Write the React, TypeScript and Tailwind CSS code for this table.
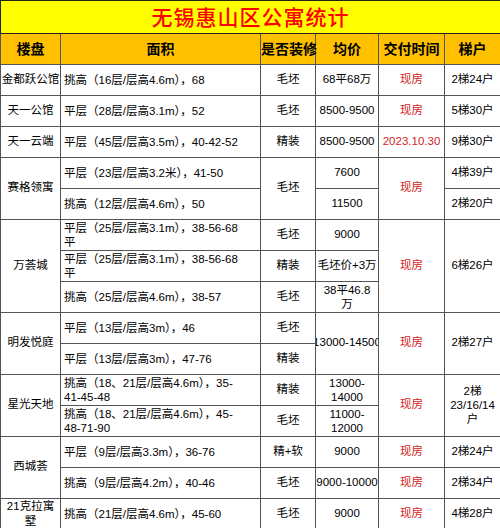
import React from 'react';

const td = 'border border-[#555] p-0 text-center align-middle';
const area = 'border border-[#555] pl-[3px] pr-0 text-left align-middle leading-[14px]';
const red = 'text-[#d42424]';

function Clip({ children }: { children: React.ReactNode }) {
  return (
    <div className="flex justify-center overflow-hidden whitespace-nowrap">
      <span>{children}</span>
    </div>
  );
}

export default function App() {
  return (
    <div className="w-[500px] h-[528px] overflow-hidden bg-white">
      <table className="w-[500px] table-fixed border-collapse border border-[#222] text-[11.5px] text-black font-['Liberation_Sans','Noto_Sans_CJK_SC',sans-serif]">
        <colgroup>
          <col className="w-[60px]" />
          <col className="w-[200px]" />
          <col className="w-[55px]" />
          <col className="w-[63px]" />
          <col className="w-[66px]" />
          <col className="w-[56px]" />
        </colgroup>
        <tbody>
          <tr className="h-[31px]">
            <td colSpan={6} className="border border-[#222] bg-[#ffff00] text-center align-middle">
              <span className="text-[21px] font-medium text-[#ff0000] tracking-[1px] font-['Noto_Sans_CJK_SC',sans-serif]">
                无锡惠山区公寓统计
              </span>
            </td>
          </tr>
          <tr className="h-[31px] bg-[#ffc000] text-[14px] font-bold text-black font-['Noto_Sans_CJK_SC',sans-serif]">
            <td className={td}>楼盘</td>
            <td className={td}>面积</td>
            <td className={`${td} whitespace-nowrap`}>是否装修</td>
            <td className={td}>均价</td>
            <td className={td}>交付时间</td>
            <td className={td}>梯户</td>
          </tr>

          <tr className="h-[31px]">
            <td className={`${td} whitespace-nowrap`}>金都跃公馆</td>
            <td className={area}>挑高（16层/层高4.6m），68</td>
            <td className={td}>毛坯</td>
            <td className={td}>68平68万</td>
            <td className={`${td} ${red}`}>现房</td>
            <td className={td}>2梯24户</td>
          </tr>
          <tr className="h-[31px]">
            <td className={td}>天一公馆</td>
            <td className={area}>平层（28层/层高3.1m），52</td>
            <td className={td}>毛坯</td>
            <td className={td}>8500-9500</td>
            <td className={`${td} ${red}`}>现房</td>
            <td className={td}>5梯30户</td>
          </tr>
          <tr className="h-[31px]">
            <td className={td}>天一云端</td>
            <td className={area}>平层（45层/层高3.5m），40-42-52</td>
            <td className={td}>精装</td>
            <td className={td}>8500-9500</td>
            <td className={`${td} ${red} whitespace-nowrap`}>2023.10.30</td>
            <td className={td}>9梯30户</td>
          </tr>

          <tr className="h-[31px]">
            <td rowSpan={2} className={td}>赛格领寓</td>
            <td className={area}>平层（23层/层高3.2米），41-50</td>
            <td rowSpan={2} className={td}>毛坯</td>
            <td className={td}>7600</td>
            <td rowSpan={2} className={`${td} ${red}`}>现房</td>
            <td className={td}>4梯39户</td>
          </tr>
          <tr className="h-[31px]">
            <td className={area}>挑高（12层/层高4.6m），50</td>
            <td className={td}>11500</td>
            <td className={td}>2梯20户</td>
          </tr>

          <tr className="h-[31px]">
            <td rowSpan={3} className={td}>万荟城</td>
            <td className={area}>平层（25层/层高3.1m），38-56-68<br />平</td>
            <td className={td}>毛坯</td>
            <td className={td}>9000</td>
            <td rowSpan={3} className={`${td} ${red}`}>现房</td>
            <td rowSpan={3} className={td}>6梯26户</td>
          </tr>
          <tr className="h-[31px]">
            <td className={area}>平层（25层/层高3.1m），38-56-68<br />平</td>
            <td className={td}>精装</td>
            <td className={`${td} whitespace-nowrap`}>毛坯价+3万</td>
          </tr>
          <tr className="h-[31px]">
            <td className={area}>挑高（25层/层高4.6m），38-57</td>
            <td className={td}>毛坯</td>
            <td className={`${td} leading-[14px]`}>38平46.8<br />万</td>
          </tr>

          <tr className="h-[31px]">
            <td rowSpan={2} className={td}>明发悦庭</td>
            <td className={area}>平层（13层/层高3m），46</td>
            <td className={td}>毛坯</td>
            <td rowSpan={2} className={td}><Clip>13000-14500</Clip></td>
            <td rowSpan={2} className={`${td} ${red}`}>现房</td>
            <td rowSpan={2} className={td}>2梯27户</td>
          </tr>
          <tr className="h-[31px]">
            <td className={area}>平层（13层/层高3m），47-76</td>
            <td className={td}>精装</td>
          </tr>

          <tr className="h-[31px]">
            <td rowSpan={2} className={td}>星光天地</td>
            <td className={area}>挑高（18、21层/层高4.6m），35-<br />41-45-48</td>
            <td className={td}>精装</td>
            <td className={`${td} leading-[14px]`}>13000-<br />14000</td>
            <td rowSpan={2} className={`${td} ${red}`}>现房</td>
            <td rowSpan={2} className={`${td} leading-[14px]`}>2梯<br />23/16/14<br />户</td>
          </tr>
          <tr className="h-[31px]">
            <td className={area}>挑高（18、21层/层高4.6m），45-<br />48-71-90</td>
            <td className={td}>毛坯</td>
            <td className={`${td} leading-[14px]`}>11000-<br />12000</td>
          </tr>

          <tr className="h-[31px]">
            <td rowSpan={2} className={td}>西城荟</td>
            <td className={area}>平层（9层/层高3.3m），36-76</td>
            <td className={td}>精+软</td>
            <td className={td}>9000</td>
            <td className={`${td} ${red}`}>现房</td>
            <td className={td}>2梯24户</td>
          </tr>
          <tr className="h-[31px]">
            <td className={area}>挑高（9层/层高4.2m），40-46</td>
            <td className={td}>毛坯</td>
            <td className={`${td} whitespace-nowrap`}><Clip>9000-10000</Clip></td>
            <td className={`${td} ${red}`}>现房</td>
            <td className={td}>2梯34户</td>
          </tr>

          <tr className="h-[31px]">
            <td className={`${td} leading-[15px]`}>21克拉寓<br />墅</td>
            <td className={area}>挑高（21层/层高4.6m），45-60</td>
            <td className={td}>毛坯</td>
            <td className={td}>9000</td>
            <td className={`${td} ${red}`}>现房</td>
            <td className={td}>4梯28户</td>
          </tr>
        </tbody>
      </table>
    </div>
  );
}
